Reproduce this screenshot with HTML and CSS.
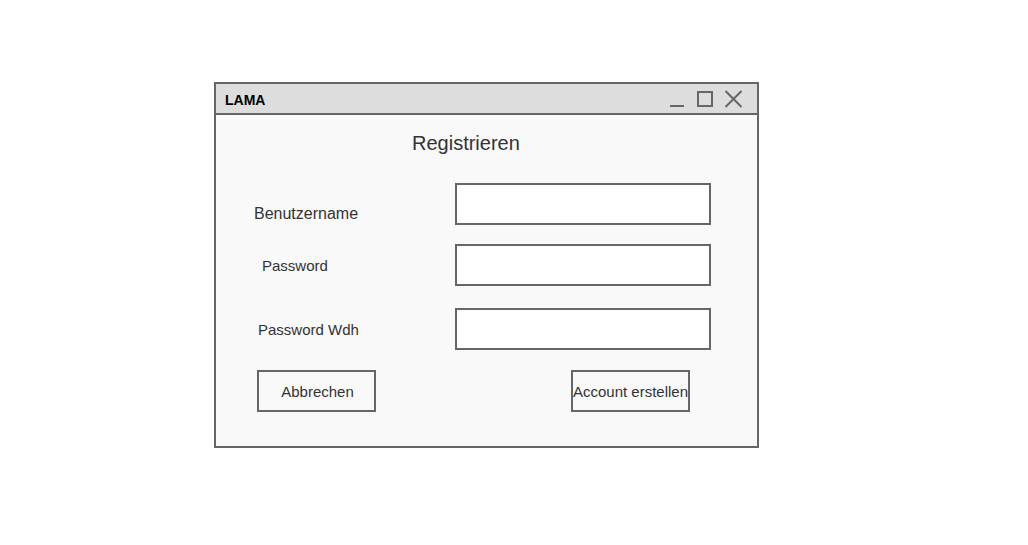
FILE: index.html
```html
<!DOCTYPE html>
<html>
<head>
<meta charset="utf-8">
<link rel="stylesheet" href="styles.css">
</head>
<body>
<div class="window">
  <div class="titlebar">
    <span class="title">LAMA</span>
    <svg class="controls" width="76" height="21" viewBox="0 0 76 21">
      <rect x="2" y="17" width="14" height="2" fill="#666"/>
      <rect x="30" y="4" width="14" height="14" fill="none" stroke="#666" stroke-width="2"/>
      <path d="M57.5 3 L73.5 19 M73.5 3 L57.5 19" stroke="#666" stroke-width="2" fill="none"/>
    </svg>
  </div>
  <div class="content">
    <div class="heading">Registrieren</div>
    <div class="form">
      <div class="row row-user">
        <label class="label label-user">Benutzername</label>
        <div class="input"></div>
      </div>
      <div class="row row-pass">
        <label class="label label-pass">Password</label>
        <div class="input"></div>
      </div>
      <div class="row row-wdh">
        <label class="label label-wdh">Password Wdh</label>
        <div class="input"></div>
      </div>
      <div class="buttons">
        <div class="button btn-cancel">Abbrechen</div>
        <div class="button btn-create">Account erstellen</div>
      </div>
    </div>
  </div>
</div>
</body>
</html>
```

FILE: styles.css
```css
html, body {
  margin: 0;
  padding: 0;
  background: #ffffff;
}
body {
  font-family: "Liberation Sans", Arial, sans-serif;
  color: #333333;
  padding: 82px 0 0 214px;
}
.window {
  box-sizing: border-box;
  width: 545px;
  height: 366px;
  border: 2px solid #666666;
  display: flex;
  flex-direction: column;
  background: #f9f9f9;
}
.titlebar {
  height: 29px;
  border-bottom: 2px solid #666666;
  background: #dddddd;
  display: flex;
  align-items: center;
  padding: 0 13px 0 9px;
}
.title {
  font-weight: bold;
  font-size: 14px;
  color: #000000;
  line-height: 16px;
  margin-top: 2px;
}
.controls {
  margin-left: auto;
  display: block;
}
.content {
  flex: 1;
  display: flex;
  flex-direction: column;
}
.heading {
  font-size: 20px;
  line-height: 24px;
  margin: 16px 0 0 196px;
}
.form {
  display: flex;
  flex-direction: column;
  margin-top: 28px;
}
.row {
  display: flex;
  height: 42px;
}
.row-pass { margin-top: 19px; }
.row-wdh { margin-top: 22px; }
.label {
  width: 239px;
  box-sizing: border-box;
  font-size: 15px;
  line-height: 17px;
  margin-top: 13px;
}
.label-user {
  font-size: 16px;
  line-height: 18px;
  margin-top: 22px;
  padding-left: 38px;
}
.label-pass { padding-left: 46px; }
.label-wdh { padding-left: 42px; }
.input {
  box-sizing: border-box;
  width: 256px;
  height: 42px;
  border: 2px solid #666666;
  background: #ffffff;
}
.buttons {
  display: flex;
  margin-top: 20px;
  padding-left: 41px;
}
.button {
  box-sizing: border-box;
  width: 119px;
  height: 42px;
  border: 2px solid #666666;
  display: flex;
  align-items: center;
  justify-content: center;
  font-size: 15px;
  line-height: 17px;
  white-space: nowrap;
}
.btn-cancel {
  padding-left: 2px;
}
.btn-create {
  margin-left: 195px;
}
```
